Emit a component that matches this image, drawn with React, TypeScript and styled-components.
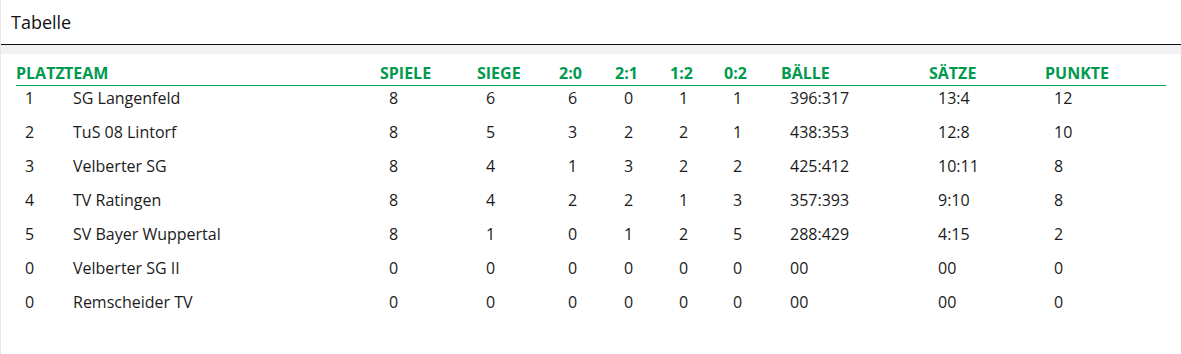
import React from "react";
import styled, { createGlobalStyle } from "styled-components";

const GlobalStyle = createGlobalStyle`
  html, body {
    margin: 0;
    padding: 0;
    background: #ffffff;
  }
  body {
    font-family: "Open Sans", "Liberation Sans", sans-serif;
    color: #1b1b1b;
  }
`;

const Card = styled.div`
  border-left: 1px solid #e6e7e9;
  min-height: 354px;
  box-sizing: border-box;
  background: #ffffff;
`;

const TitleBar = styled.div`
  padding: 10px 10px;
  font-size: 18px;
  line-height: 24px;
  color: #111;
  border-bottom: 1px solid #111;
`;

const Spacer = styled.div`
  height: 9px;
  background: #f0f1f3;
`;

const TableWrap = styled.div`
  padding: 0 0 0 15px;
`;

const COLS = "48px 316px 97px 82px 56px 55px 54px 57px 148px 116px 121px";

const HeadRow = styled.div`
  display: grid;
  grid-template-columns: ${COLS};
  width: 1150px;
  padding: 8px 0 1px;
  border-bottom: 1px solid #00a651;
`;

const HeadCell = styled.div`
  font-size: 16px;
  line-height: 22px;
  font-weight: 700;
  color: #009a4e;
  white-space: nowrap;
`;

const Row = styled.div`
  display: grid;
  grid-template-columns: ${COLS};
  width: 1150px;
  height: 34px;
  box-sizing: border-box;
  padding: 1px 0 11px;
`;

const Cell = styled.div`
  font-size: 16px;
  line-height: 22px;
  padding-left: 9px;
  white-space: nowrap;
`;

const headers = [
  "PLATZ",
  "TEAM",
  "SPIELE",
  "SIEGE",
  "2:0",
  "2:1",
  "1:2",
  "0:2",
  "BÄLLE",
  "SÄTZE",
  "PUNKTE",
];

const rows: string[][] = [
  ["1", "SG Langenfeld", "8", "6", "6", "0", "1", "1", "396:317", "13:4", "12"],
  ["2", "TuS 08 Lintorf", "8", "5", "3", "2", "2", "1", "438:353", "12:8", "10"],
  ["3", "Velberter SG", "8", "4", "1", "3", "2", "2", "425:412", "10:11", "8"],
  ["4", "TV Ratingen", "8", "4", "2", "2", "1", "3", "357:393", "9:10", "8"],
  ["5", "SV Bayer Wuppertal", "8", "1", "0", "1", "2", "5", "288:429", "4:15", "2"],
  ["0", "Velberter SG II", "0", "0", "0", "0", "0", "0", "00", "00", "0"],
  ["0", "Remscheider TV", "0", "0", "0", "0", "0", "0", "00", "00", "0"],
];

export default function App() {
  return (
    <>
      <GlobalStyle />
      <Card>
        <TitleBar>Tabelle</TitleBar>
        <Spacer />
        <TableWrap>
          <HeadRow>
            {headers.map((h) => (
              <HeadCell key={h}>{h}</HeadCell>
            ))}
          </HeadRow>
          {rows.map((r, i) => (
            <Row key={i}>
              {r.map((c, j) => (
                <Cell key={j}>{c}</Cell>
              ))}
            </Row>
          ))}
        </TableWrap>
      </Card>
    </>
  );
}
